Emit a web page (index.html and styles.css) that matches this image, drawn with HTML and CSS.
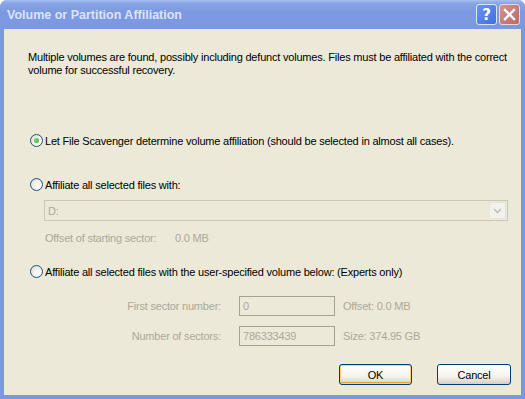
FILE: index.html
```html
<!DOCTYPE html>
<html>
<head>
<meta charset="utf-8">
<link rel="stylesheet" href="styles.css">
</head>
<body>
<div class="window">
  <div class="titlebar">
    <span class="title">Volume or Partition Affiliation</span>
    <div class="tb-buttons">
      <div class="tb-btn help">?</div>
      <div class="tb-btn close">
        <svg width="13" height="13" viewBox="0 0 13 13"><path d="M2 2 L11 11 M11 2 L2 11" stroke="#fff" stroke-width="2.4" stroke-linecap="square"/></svg>
      </div>
    </div>
  </div>
  <div class="client">
    <p class="intro">Multiple volumes are found, possibly including defunct volumes. Files must be affiliated with the correct volume for successful recovery.</p>

    <div class="radio-row r1"><span class="radio checked"></span><span>Let File Scavenger determine volume affiliation (should be selected in almost all cases).</span></div>

    <div class="radio-row r2"><span class="radio"></span><span>Affiliate all selected files with:</span></div>
    <div class="combo"><span class="combo-val">D:</span><span class="combo-btn"><svg width="9" height="6" viewBox="0 0 9 6"><path d="M1 1 L4.5 4.5 L8 1" fill="none" stroke="#c3c1b6" stroke-width="1.6"/></svg></span></div>
    <div class="offset-row"><span class="offset-label">Offset of starting sector:</span><span>0.0 MB</span></div>

    <div class="radio-row r3"><span class="radio"></span><span>Affiliate all selected files with the user-specified volume below: (Experts only)</span></div>

    <div class="field-row f1"><span class="field-label">First sector number:</span><span class="field-input">0</span><span class="field-note">Offset: 0.0 MB</span></div>
    <div class="field-row f2"><span class="field-label">Number of sectors:</span><span class="field-input">786333439</span><span class="field-note">Size: 374.95 GB</span></div>

    <div class="buttons">
      <div class="btn default">OK</div>
      <div class="btn">Cancel</div>
    </div>
  </div>
</div>
</body>
</html>
```
FILE: styles.css
```css
html, body { margin: 0; padding: 0; background: #ffffff; }
body { width: 525px; height: 399px; overflow: hidden; font-family: "Liberation Sans", Arial, sans-serif; font-size: 11px; letter-spacing: -0.2px; color: #000; }
.window { width: 525px; height: 399px; display: flex; flex-direction: column; background: #7b97e0; border-radius: 7px 7px 0 0; overflow: hidden; }
.titlebar { height: 29px; flex: none; display: flex; align-items: center; justify-content: space-between; padding: 0 5px 0 7px; background: linear-gradient(#a9c1f1 0px, #8aa6e6 3px, #7c98e0 12px, #7d99e1 22px, #7b97e0 29px); }
.title { font-family: "Liberation Sans", Arial, sans-serif; font-weight: bold; font-size: 12.5px; letter-spacing: 0; color: #dbe4f8; }
.tb-buttons { display: flex; gap: 2px; }
.tb-btn { width: 21px; height: 21px; box-sizing: border-box; border-radius: 3px; display: flex; align-items: center; justify-content: center; }
.help { background: linear-gradient(135deg, #6d95f0, #3d6fe0); border: 1px solid #dbe5fa; color: #fff; font-family: "DejaVu Sans", sans-serif; font-weight: bold; font-size: 15px; letter-spacing: 0; }
.close { background: linear-gradient(135deg, #d4928e, #b96a6c); border: 1px solid #e8d6d8; }
.client { flex: 1; background: #ece9d8; margin: 0 4px 4px 4px; padding: 0 0 0 24px; display: flex; flex-direction: column; align-items: flex-start; }
.intro { margin: 22px 0 0 0; width: 486px; line-height: 13px; }
.radio-row { display: flex; align-items: center; height: 13px; margin-left: 2px; }
.radio-row span:last-child { margin-left: 2px; }
.r1 { margin-top: 57px; }
.r2 { margin-top: 31px; }
.r3 { margin-top: 20px; }
.radio { width: 13px; height: 13px; box-sizing: border-box; border-radius: 50%; border: 1px solid #1d5281; background: radial-gradient(circle at 65% 65%, #ffffff 0%, #f4f3ee 35%, #d8d6cb 100%); display: flex; align-items: center; justify-content: center; }
.radio.checked::after { content: ""; width: 5px; height: 5px; border-radius: 50%; background: radial-gradient(circle at 40% 40%, #7fe07f, #21a121); }
.combo { margin-top: 9px; margin-left: 16px; width: 464px; height: 21px; box-sizing: border-box; border: 1px solid #c9c7ba; background: #ece9d8; display: flex; align-items: center; justify-content: space-between; color: #aca899; }
.combo-val { padding-left: 3px; }
.combo-btn { width: 17px; height: 17px; margin-right: 1px; background: #f2f1eb; border: 1px solid #e6e4da; box-sizing: border-box; display: flex; align-items: center; justify-content: center; }
.offset-row { margin-top: 11px; margin-left: 17px; height: 13px; display: flex; color: #aca899; }
.offset-label { width: 130px; }
.field-row { display: flex; align-items: center; height: 20px; color: #aca899; }
.f1 { margin-top: 18px; }
.f2 { margin-top: 10px; }
.field-label { width: 211px; text-align: right; padding-right: 18px; box-sizing: border-box; }
.field-input { width: 96px; height: 20px; box-sizing: border-box; border: 1px solid #a4a294; background: #ece9d8; padding-left: 3px; line-height: 18px; }
.field-note { margin-left: 8px; }
.buttons { margin-top: 18px; margin-left: 311px; display: flex; gap: 25px; }
.btn { width: 73px; height: 21px; box-sizing: border-box; border: 1px solid #003c74; border-radius: 3px; background: linear-gradient(#ffffff, #f4f3ee 60%, #d6d0c5); display: flex; align-items: center; justify-content: center; color: #000; }
.btn:last-child { width: 74px; }
.btn.default { box-shadow: inset 0 0 0 1px #fcd07a, inset 0 -1px 0 1px #e5a03a; }
```
